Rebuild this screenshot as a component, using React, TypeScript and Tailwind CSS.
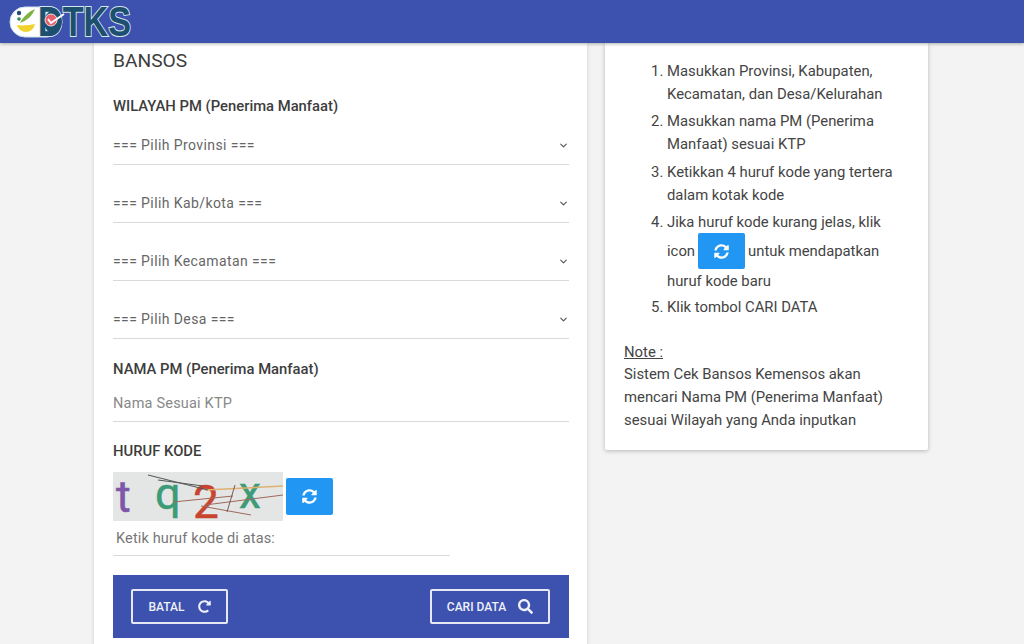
import { ChevronDown } from "lucide-react";
import { FaRedoAlt, FaSearch, FaSyncAlt } from "react-icons/fa";

const selects = [
  "=== Pilih Provinsi ===",
  "=== Pilih Kab/kota ===",
  "=== Pilih Kecamatan ===",
  "=== Pilih Desa ===",
];

function Logo() {
  return (
    <svg width="124" height="36" viewBox="0 0 124 36" className="block">
      <rect x="1" y="3" width="52" height="30" rx="15" fill="#ffffff" stroke="#cfe3ee" />
      <path d="M8 21c5 1 13 0 18-1-1 5-5 8-9 8s-8-3-9-7z" fill="#f2d22e" />
      <path d="M11 19c3-6 8-11 15-14-3 7-7 11-15 14z" fill="#7fb241" />
      <circle cx="10" cy="9" r="2.2" fill="#1f4e79" />
      <circle cx="10" cy="15" r="1.8" fill="#2e8b57" />
      <text
        x="29"
        y="32"
        fontFamily="Liberation Sans"
        fontWeight="700"
        fontSize="42"
        textLength="93"
        lengthAdjust="spacingAndGlyphs"
        fill="#1d4f6e"
        stroke="#d5e6ef"
        strokeWidth="2"
        paintOrder="stroke"
      >
        DTKS
      </text>
      <ellipse cx="44" cy="18" rx="9" ry="11" fill="#1d4f6e" />
      <circle cx="42" cy="16" r="6" fill="#e8606b" stroke="#f3dfe2" />
      <path d="M39 15l3 4 13-9" fill="none" stroke="#ffffff" strokeWidth="2" />
    </svg>
  );
}

function Captcha() {
  return (
    <svg width="170" height="49" viewBox="0 0 170 49" className="block shrink-0 bg-[#e3e6e5]">
      <text x="3" y="40" fontFamily="Roboto" fontSize="45" fill="#7e57a8" stroke="#7e57a8" strokeWidth="0.5">t</text>
      <text x="42" y="37" fontFamily="Roboto" fontSize="45" fill="#3d9b78" stroke="#3d9b78" strokeWidth="0.5">q</text>
      <text x="80" y="46" fontFamily="Roboto" fontSize="46" fill="#c9432f" stroke="#c9432f" strokeWidth="0.5">2</text>
      <text x="126" y="36" fontFamily="Roboto" fontSize="44" fill="#3d9b78" stroke="#3d9b78" strokeWidth="0.5">x</text>
      <path d="M92 18l78-4" fill="none" stroke="#e0b070" strokeWidth="1.5" />
      <path d="M92 33l78-10M60 30l60-6M88 34l50 9" fill="none" stroke="#a0685c" strokeWidth="1" />
      <path d="M35 3l60 15M45 8l45 6" fill="none" stroke="#555555" strokeWidth="1" />
      <path d="M114 40l8-27" fill="none" stroke="#7a5a50" strokeWidth="1" />
    </svg>
  );
}

function OutlineButton({ label, wide, children }: { label: string; wide?: boolean; children: React.ReactNode }) {
  return (
    <button
      className={`flex h-[35px] items-center justify-center rounded-[2px] border-2 border-[#e6e9f5] text-[12px] font-medium text-[#eef0fa] ${
        wide ? "w-[120px] gap-[12px]" : "w-[97px] gap-[13px]"
      }`}
    >
      {label}
      {children}
    </button>
  );
}

export default function App() {
  return (
    <div className="flex h-[644px] w-[1024px] flex-col overflow-hidden bg-[#f3f3f3] font-['Roboto',sans-serif] text-[#444444]">
      <header className="z-10 flex h-[43px] shrink-0 items-center bg-[#3d51ae] pl-[9px] shadow-[0_1px_3px_rgba(0,0,0,0.3)]">
        <Logo />
      </header>

      <main className="flex flex-1 items-start gap-[18px] pl-[94px]">
        <section className="h-[620px] w-[493px] shrink-0 bg-white pt-[6px] pr-[18px] pl-[19px] shadow-[0_0_4px_rgba(0,0,0,0.15)]">
          <h1 className="text-[19.2px] leading-[24px] text-[#3d3d3d]">BANSOS</h1>
          <h2 className="mt-[23px] text-[14.8px] leading-[20px] font-medium text-[#3d3d3d]">WILAYAH PM (Penerima Manfaat)</h2>

          <div className="mt-[9px] flex flex-col gap-[18px]">
            {selects.map((s) => (
              <div key={s} className="flex h-[40px] items-center justify-between border-b border-[#d9d9d9] pt-[1px] text-[14px] tracking-[0.4px] text-[#666666]">
                <span>{s}</span>
                <ChevronDown size={11} strokeWidth={2.5} className="text-[#555555]" />
              </div>
            ))}
          </div>

          <h2 className="mt-[20px] text-[14.8px] leading-[20px] font-medium text-[#3d3d3d]">NAMA PM (Penerima Manfaat)</h2>
          <div className="mt-[15px] h-[28px] border-b border-[#d9d9d9] text-[14.5px] leading-[20px] tracking-[0.2px] text-[#888888]">Nama Sesuai KTP</div>

          <h2 className="mt-[19px] text-[14.8px] leading-[20px] font-medium text-[#3d3d3d]">HURUF KODE</h2>
          <div className="mt-[11px] flex items-center gap-[3px]">
            <Captcha />
            <button className="flex h-[37px] w-[47px] items-center justify-center rounded-[2px] bg-[#2196f3] text-white">
              <FaSyncAlt size={15} />
            </button>
          </div>
          <div className="mt-[7px] h-[28px] w-[337px] border-b border-[#d9d9d9] pl-[3px] text-[14.5px] leading-[22px] tracking-[0.15px] text-[#777777]">Ketik huruf kode di atas:</div>

          <div className="mt-[19px] flex h-[63px] items-center justify-between bg-[#3d51ae] pr-[19px] pl-[18px]">
            <OutlineButton label="BATAL">
              <FaRedoAlt size={13} />
            </OutlineButton>
            <OutlineButton label="CARI DATA" wide>
              <FaSearch size={15} />
            </OutlineButton>
          </div>
        </section>

        <aside className="h-[407px] w-[323px] shrink-0 rounded-b-[2px] bg-white pt-[17px] pr-[19px] pl-[19px] text-[14.85px] text-[#444444] shadow-[0_1px_4px_rgba(0,0,0,0.25)]">
          <ol className="list-decimal pl-[43px] leading-[23px]">
            <li>Masukkan Provinsi, Kabupaten, Kecamatan, dan Desa/Kelurahan</li>
            <li className="mt-[4px]">Masukkan nama PM (Penerima Manfaat) sesuai KTP</li>
            <li className="mt-[5px]">Ketikkan 4 huruf kode yang tertera dalam kotak kode</li>
            <li className="mt-[4px]">
              Jika huruf kode kurang jelas, klik
              <div className="-mt-[1px] flex h-[36px] items-center gap-[3px]">
                icon
                <span className="flex h-[36px] w-[47px] items-center justify-center rounded-[2px] bg-[#2196f3] text-white">
                  <FaSyncAlt size={15} />
                </span>
                untuk mendapatkan
              </div>
              <div className="mt-[1px]">huruf kode baru</div>
            </li>
            <li className="mt-[3px]">Klik tombol CARI DATA</li>
          </ol>
          <div className="mt-[22px]">
            <span className="block leading-[22px] underline">Note :</span>
            <p className="leading-[23px]">Sistem Cek Bansos Kemensos akan mencari Nama PM (Penerima Manfaat) sesuai Wilayah yang Anda inputkan</p>
          </div>
        </aside>
      </main>
    </div>
  );
}
